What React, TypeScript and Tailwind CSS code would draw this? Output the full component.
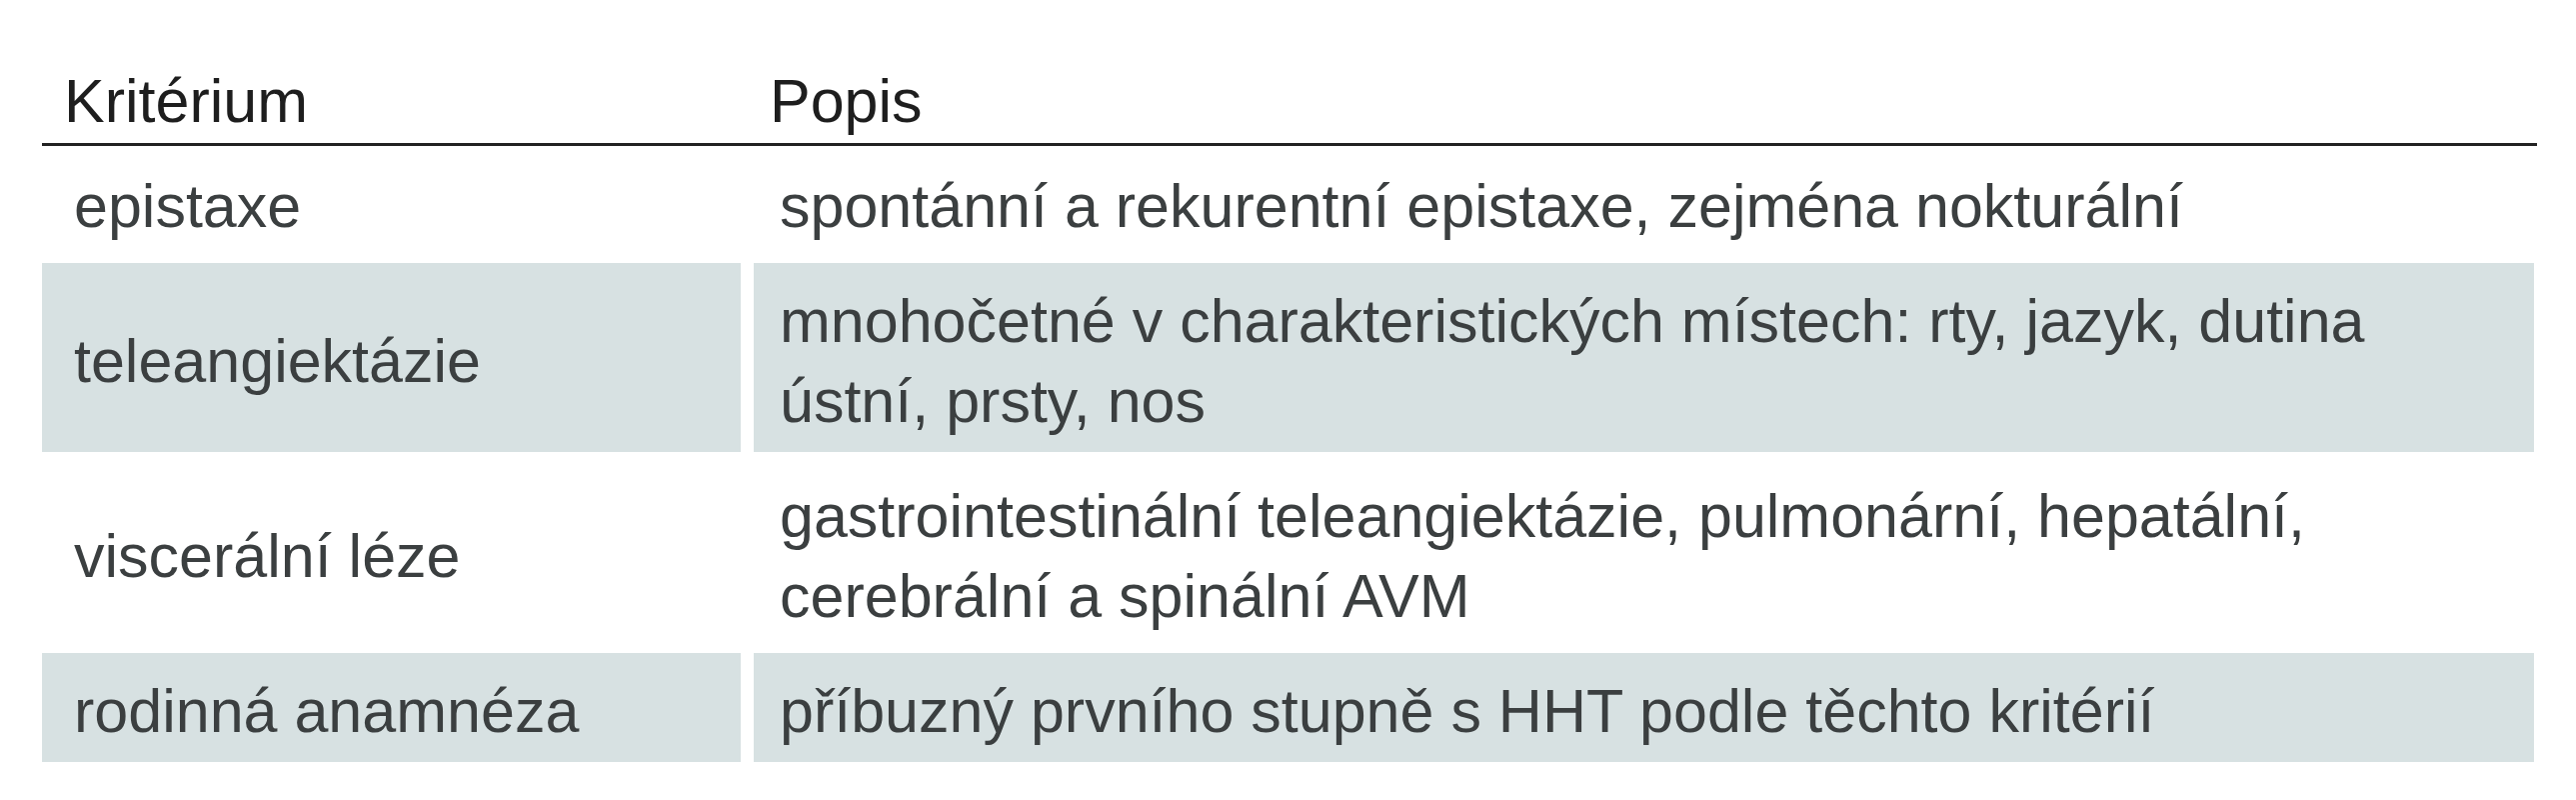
import React from "react";

const rows: { k: string; d: React.ReactNode; shaded: boolean }[] = [
  { k: "epistaxe", d: "spontánní a rekurentní epistaxe, zejména nokturální", shaded: false },
  {
    k: "teleangiektázie",
    d: (
      <>
        mnohočetné v charakteristických místech: rty, jazyk, dutina
        <br />
        ústní, prsty, nos
      </>
    ),
    shaded: true,
  },
  {
    k: "viscerální léze",
    d: (
      <>
        gastrointestinální teleangiektázie, pulmonární, hepatální,
        <br />
        cerebrální a spinální AVM
      </>
    ),
    shaded: false,
  },
  { k: "rodinná anamnéza", d: "příbuzný prvního stupně s HHT podle těchto kritérií", shaded: true },
];

export default function App() {
  return (
    <div
      className="w-[2577px] h-[800px] bg-white overflow-hidden"
      style={{ fontFamily: '"Liberation Sans", Arial, sans-serif' }}
    >
      <div className="ml-[42px] w-[2496px]">
        <div className="flex border-b-[3px] border-[#222222] pt-[61px] pb-[2px] text-[61px] leading-[80px] text-[#1e1e1e]">
          <div className="w-[712px] pl-[22px]">Kritérium</div>
          <div className="pl-[16px]">Popis</div>
        </div>
        <div className="grid w-[2493px] grid-cols-[699px_1781px] gap-x-[13px] gap-y-[6px] pt-[2px] text-[61px] leading-[80px] text-[#3b3f40]">
          {rows.map((r) => (
            <React.Fragment key={r.k}>
              <div
                className={`flex items-center pl-[32px] pt-[18px] pb-[11px] ${
                  r.shaded ? "bg-[#d7e1e2]" : ""
                }`}
              >
                {r.k}
              </div>
              <div className={`pl-[26px] pt-[18px] pb-[11px] ${r.shaded ? "bg-[#d7e1e2]" : ""}`}>
                {r.d}
              </div>
            </React.Fragment>
          ))}
        </div>
      </div>
    </div>
  );
}
